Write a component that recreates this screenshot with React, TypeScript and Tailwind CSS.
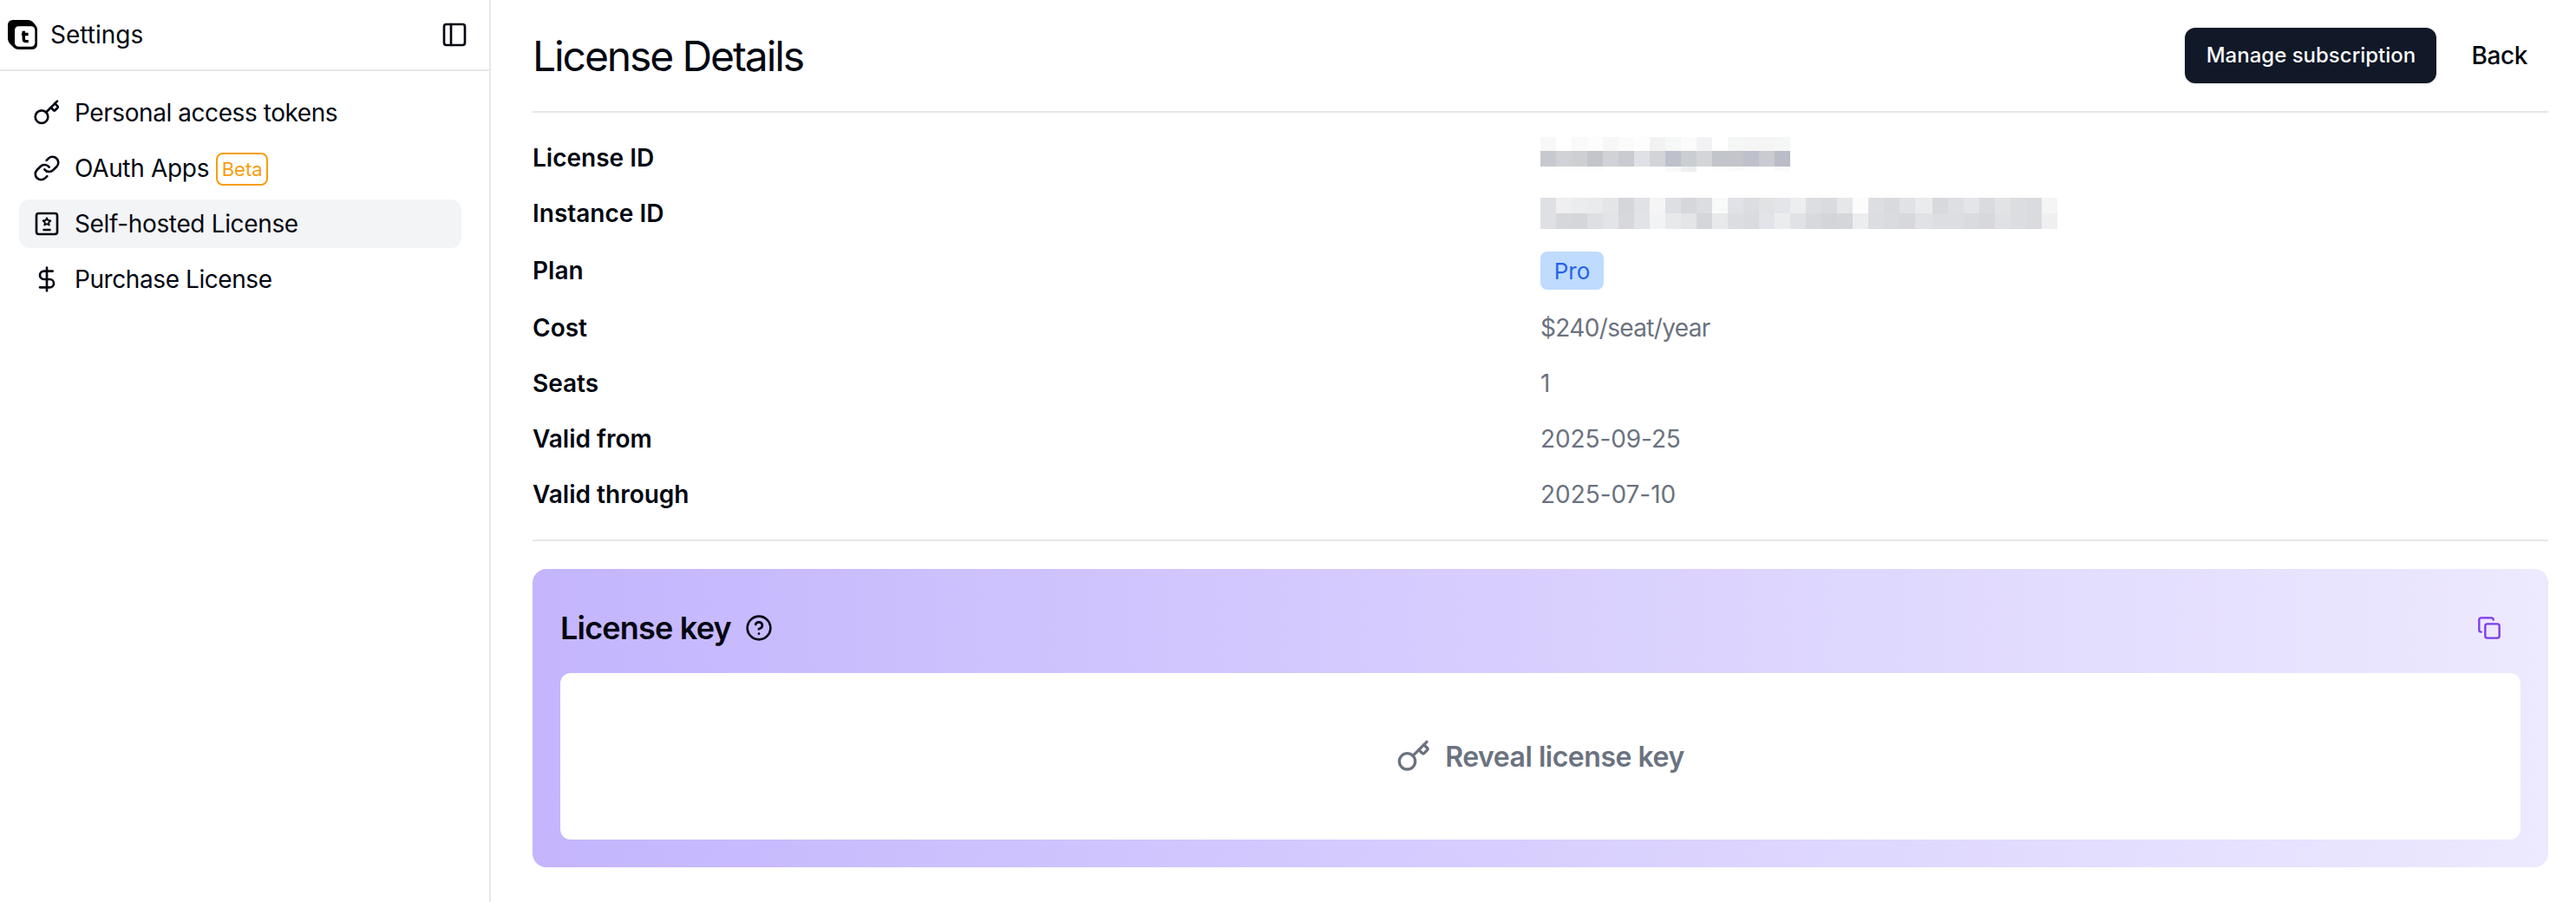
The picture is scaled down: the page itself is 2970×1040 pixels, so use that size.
import { CircleHelp, Copy, DollarSign, Key, Link, PanelLeft } from "lucide-react";

const idTop = ["#f8f8f8","#ffffff","#fafafa","#fdfdfd","#f7f7f7","#fbfbfb","#fdfdfd","#f2f2f2","#f6f8f7","#fbfbfb","#f2f2f4","#ffffff","#f5f7f6","#f5f5f5","#f5f5f5","#f5f7f6"];
const idMid = ["#c6c9ce","#d1d2d6","#cecfd3","#c4c5ca","#d1d2d6","#cacbd1","#dfe1e6","#d2d4d8","#bec1cb","#caced3","#d4d5d9","#c2c5ca","#c4c4cb","#bec1cb","#cacad1","#babdc7"];
const idLow = ["#ffffff","#fefefe","#fdfdfd","#fdfdfd","#ffffff","#ffffff","#ffffff","#ffffff","#f9f9fa","#eeeff1","#ffffff","#fefefe","#f9fbfa","#fefefe","#ffffff","#fafcfb"];
const instTop = ["#dfe0e4","#efeff1","#ebecee","#eaebed","#e4e5e7","#d5d6da","#e1e2e6","#f5f5f6","#dedfe4","#d6d7db","#dcdde1","#f8faf9","#e1e2e7","#dcdde1","#e1e2e4","#e4e5ea","#edeeef","#dddee2","#dadbdf","#e6e7e8","#fcfcfc","#dddee2","#d9dade","#e1e2e6","#eaebed","#d8d9dd","#dedfe3","#e4e5ea","#dadbdf","#e2e3e4","#dcdde1","#dadbdf","#f5f5f5"];
const instLow = ["#dfe0e4","#d6d7db","#d5d6da","#dedfe3","#e3e4e8","#d7d8dc","#e2e3e6","#f1f3f4","#e8e9eb","#e4e5e7","#d5d6da","#e8e9ea","#dcdde1","#dadbdf","#e3e4e9","#ebeced","#e1e2e6","#d8d9dd","#d4d5d9","#d5d6da","#ecedee","#dcdde1","#dadbdf","#d7d8dc","#e1e2e6","#dddee2","#dddee2","#dadbdf","#d7d8dc","#e0e1e5","#dcdde1","#dadbdf","#efeff1"];

function Strip({ colors, height }: { colors: string[]; height: string }) {
  return (
    <div className={`flex ${height}`}>
      {colors.map((c, i) => (
        <div key={i} className={`h-full ${i === 24 ? "w-5" : "w-[18px]"}`} style={{ backgroundColor: c }} />
      ))}
    </div>
  );
}

function Logo() {
  return (
    <svg className="h-[34px] w-[34px]" viewBox="0 0 34 34" fill="none">
      <path d="M6 0H23.500Q27 0 29 2.500L32 6Q34 8.500 34 11.500V27.500Q34 34 28 34H12.500Q9 34 7 32L2.500 27.500Q0 25 0 21.500V6.500Q0 0 6 0Z" fill="#000" />
      <rect x="8" y="7.300" width="23.300" height="23.500" rx="4.500" fill="#fff" />
      <path d="M18.300 12.700V22Q18.300 24.600 21 24.600H23.800M16 16.500H23.600" stroke="#000" strokeWidth="3.400" />
    </svg>
  );
}

function LicenseIcon({ className }: { className?: string }) {
  return (
    <svg className={className} viewBox="0 0 24 24" fill="none" stroke="currentColor" strokeWidth="2" strokeLinecap="round" strokeLinejoin="round">
      <rect x="3" y="3" width="18" height="18" rx="2" />
      <path d="M9.300 17.300h5.400" strokeWidth="1.800" />
      <path strokeWidth="1.400" d="M12 7l1 2.020 2.230.33-1.610 1.580.38 2.220L12 12.100l-2 1.050.38-2.220L8.770 9.350 11 9.020Z" />
    </svg>
  );
}

const nav = [
  { label: "Personal access tokens", Icon: Key, tracking: "tracking-[-0.43px]" },
  { label: "OAuth Apps", Icon: Link, beta: true, tracking: "tracking-[-0.32px]" },
  { label: "Self-hosted License", Icon: LicenseIcon, active: true, tracking: "tracking-[-0.35px]" },
  { label: "Purchase License", Icon: DollarSign, tracking: "tracking-[-0.42px]" },
];

const details = [
  { label: "Cost", value: "$240/seat/year", tracking: "tracking-[-0.65px]" },
  { label: "Seats", value: "1", tracking: "" },
  { label: "Valid from", value: "2025-09-25", tracking: "tracking-[-0.1px]" },
  { label: "Valid through", value: "2025-07-10", tracking: "tracking-[-0.05px]" },
];

export default function App() {
  return (
    <div className="flex h-[1040px] w-[2970px] overflow-hidden bg-white font-['Inter',sans-serif] text-[28px] leading-[48px] text-[#030712]">
      <aside className="w-[566px] shrink-0 border-r-2 border-[#e5e7eb]">
        <div className="flex h-[82px] items-center border-b-2 border-[#e5e7eb] pr-6 pl-[9px]">
          <Logo />
          <span className="ml-[15px]">Settings</span>
          <PanelLeft className="ml-auto size-8" />
        </div>
        <nav className="flex flex-col gap-2 pt-5 pr-8 pl-[22px]">
          {nav.map(({ label, Icon, beta, active, tracking }) => (
            <a key={label} className={`flex h-14 items-center rounded-xl px-4 ${active ? "bg-[#f3f4f6]" : ""}`}>
              <Icon className="size-8" />
              <span className={`ml-4 ${tracking}`}>{label}</span>
              {beta && (
                <span className="mt-[2px] ml-2 flex h-[38px] w-[60px] items-center justify-center rounded-lg border-2 border-[#f59e0b] text-[22px] text-[#f59e0b]">Beta</span>
              )}
            </a>
          ))}
        </nav>
      </aside>

      <main className="flex-1 pr-8 pl-12">
        <header className="flex h-[130px] items-center border-b-2 border-[#e5e7eb]">
          <h1 className="pt-[2px] text-5xl tracking-[-2.1px]">License Details</h1>
          <button className="ml-auto h-16 w-[290px] rounded-xl bg-[#111827] text-2xl font-medium text-[#f9fafb] shadow-sm">Manage subscription</button>
          <button className="mr-6 ml-10 font-medium tracking-[-0.4px]">Back</button>
        </header>

        <dl className="grid grid-cols-2 gap-y-4 border-b-2 border-[#e5e7eb] py-7">
          <dt className="font-semibold">License ID</dt>
          <dd className="h-12">
            <Strip colors={idTop} height="h-4" />
            <Strip colors={idMid} height="h-[18px]" />
            <Strip colors={idLow} height="h-[6px]" />
          </dd>
          <dt className="font-semibold">Instance ID</dt>
          <dd className="h-12 pt-[6px]">
            <Strip colors={instTop} height="h-[18px]" />
            <Strip colors={instLow} height="h-[18px]" />
          </dd>
          <dt className="flex h-[52px] items-center font-semibold">Plan</dt>
          <dd className="flex h-[52px] items-center">
            <span className="flex h-11 w-[73px] items-center justify-center rounded-lg bg-[#bfdbfe] pt-px text-[26px] text-[#2563eb]">Pro</span>
          </dd>
          {details.map(({ label, value, tracking }) => (
            <div key={label} className="col-span-2 grid grid-cols-2">
              <dt className="font-semibold">{label}</dt>
              <dd className={`text-[#6b7280] ${tracking}`}>{value}</dd>
            </div>
          ))}
        </dl>

        <section className="mt-8 h-[344px] rounded-2xl bg-linear-to-r from-[#c4b5fd] to-[#ede9fe] px-8">
          <div className="flex h-[120px] items-center pt-4">
            <h2 className="text-4xl font-semibold tracking-[-0.8px]">License key</h2>
            <CircleHelp className="ml-4 size-8" />
            <Copy className="mr-[22px] ml-auto size-7 text-[#7c3aed]" />
          </div>
          <button className="flex h-48 w-full items-center justify-center gap-4 rounded-xl bg-white text-[32px] font-semibold tracking-[-0.48px] text-[#6b7280]">
            <Key className="size-10" />
            <span className="pt-px">Reveal license key</span>
          </button>
        </section>
      </main>
    </div>
  );
}
